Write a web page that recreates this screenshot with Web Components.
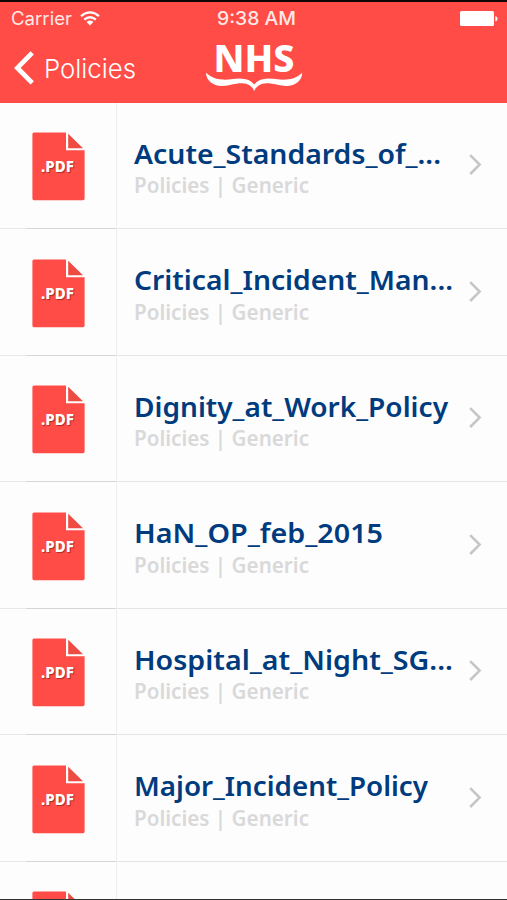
<!DOCTYPE html>
<html lang="en">
<head>
<meta charset="utf-8">
<meta name="viewport" content="width=device-width, initial-scale=1">
<title>Policies</title>
<style>
	html, body { margin: 0; height: 100%; overflow: hidden; background: #fdfdfd; }
	body { font-family: "Noto Sans", sans-serif; }
</style>
</head>
<body>
<policy-app>
	<status-bar slot="top" carrier="Carrier" time="9:38 AM"></status-bar>
	<nav-bar slot="top">Policies</nav-bar>
	<policy-row span="307">Acute_Standards_of_...</policy-row>
	<policy-row span="319">Critical_Incident_Man...</policy-row>
	<policy-row span="314">Dignity_at_Work_Policy</policy-row>
	<policy-row span="249">HaN_OP_feb_2015</policy-row>
	<policy-row span="319">Hospital_at_Night_SG...</policy-row>
	<policy-row span="294">Major_Incident_Policy</policy-row>
	<policy-row></policy-row>
</policy-app>

<script>
/* Base class: puts the markup of a subclass in an open shadow root */
class BaseElement extends HTMLElement {
	constructor() {
		super();
		this.attachShadow({ mode: 'open' });
	}

	connectedCallback() {
		this.shadowRoot.innerHTML = this.render();
	}
}

/**
 * fit-text: one line of text set to a fixed width
 *
 * Attributes: text, span (width), size, rise (baseline)
 */
class FitText extends BaseElement {
	render() {
		const span = this.getAttribute('span');
		const size = this.getAttribute('size');
		const rise = this.getAttribute('rise');
		return `
      <style>
        :host { display: block; }
        svg { display: block; overflow: visible; }
        text { fill: currentColor; font: inherit; }
      </style>
      <svg width="${span}" height="${size}">
        <text x="0" y="${rise}" style="font-size:${size}px" textLength="${span}" lengthAdjust="spacingAndGlyphs">${this.getAttribute('text')}</text>
      </svg>
    `;
	}
}

class StatusBar extends BaseElement {
	render() {
		return `
      <style>
        :host {
          display: grid;
          grid-template-columns: 1fr auto 1fr;
          align-items: center;
          height: 33px;
          padding: 0 9px 0 11px;
          color: #ffe9e7;
          font-family: Inter, sans-serif;
        }
        .left { display: flex; align-items: center; gap: 8px; }
        .time { font-weight: 500; padding-left: 4px; }
        .battery { justify-self: end; display: block; }
      </style>
      <div class="left">
        <fit-text text="${this.getAttribute('carrier')}" span="61" size="18" rise="15"></fit-text>
        <svg width="20" height="16" viewBox="0 0 20 16" fill="none" stroke="#fff" stroke-width="2.3">
          <path d="M1 5.1Q10-2.3 19 5.1M4.2 8.7Q10 3.7 15.8 8.7"/>
          <path d="M6.6 11Q10 8.2 13.4 11L10 14.4Z" fill="#fff" stroke="none"/>
        </svg>
      </div>
      <fit-text class="time" text="${this.getAttribute('time')}" span="79" size="18" rise="15"></fit-text>
      <svg class="battery" width="39" height="16" viewBox="0 0 39 16" fill="#fff">
        <rect x="1" y="0" width="34" height="15" rx="1.5"/>
        <path d="M36.3 5Q38.6 5.6 38.6 7.8T36.3 10.5Z"/>
      </svg>
    `;
	}
}

class NavBar extends BaseElement {
	render() {
		return `
      <style>
        :host {
          display: grid;
          grid-template-columns: 1fr 98px 1fr;
          height: 67px;
          color: #fff;
        }
        .back {
          display: flex;
          align-items: center;
          gap: 10px;
          padding: 0 0 1px 14px;
          font-family: Inter, sans-serif;
          font-weight: 300;
        }
        .logo { display: block; margin-top: 6px; overflow: visible; }
        .logo text { font: 800 37px/1 "Noto Sans", sans-serif; }
      </style>
      <div class="back">
        <svg width="20" height="34" viewBox="0 0 20 34" fill="none" stroke="#fff" stroke-width="4.8">
          <path d="M18.2 1.9L3.4 16.9L18.2 31.9"/>
        </svg>
        <fit-text text="${this.textContent}" span="92" size="26" rise="22.5"></fit-text>
      </div>
      <svg class="logo" width="98" height="54" viewBox="0 0 98 54" fill="#fff">
        <text x="8.5" y="30.8" textLength="81" lengthAdjust="spacingAndGlyphs">NHS</text>
        <path d="M1 31.7Q8 38 17 38.6C25 39 29 37.5 35 37.5Q45 37.6 49.2 43.5Q53.5 37.6 63.5 37.5C69.5 37.5 73.5 39 81.5 38.6Q90.5 38 97.2 31.7C97.2 39.5 90.5 44.8 81.5 45C73.5 45 69.5 42.3 61.5 42.3Q52.5 42.6 49.2 50Q46 42.6 37 42.3C29 42.3 25 45 17 45C8 44.8 1 39.5 1 31.7Z"/>
      </svg>
    `;
	}
}

class PdfIcon extends BaseElement {
	render() {
		return `
      <style>
        :host { display: block; }
        svg { display: block; }
        text { font: 800 15px "Noto Sans", sans-serif; }
      </style>
      <svg width="54" height="70" viewBox="0 0 54 70">
        <path d="M2 .4H34V18.3H52.6V66.6Q52.6 68.2 51 68.2H2Q.4 68.2 .4 66.6V1.9Q.4 .4 2 .4Z" fill="#ff4c46"/>
        <path d="M36.2 1.8L51 16.2H36.2Z" fill="#ee4b43"/>
        ${this.hasAttribute('blank') ? '' : `
        <text x="9" y="40" fill="#fff" style="text-shadow: 1px 1px 1px rgba(120, 20, 20, .6)" textLength="33" lengthAdjust="spacingAndGlyphs">.PDF</text>`}
      </svg>
    `;
	}
}

/**
 * policy-row: a document in the list, its title is the text content
 */
class PolicyRow extends BaseElement {
	render() {
		const title = this.textContent;
		const body = title ? `
        <fit-text class="title" text="${title}" span="${this.getAttribute('span')}" size="27" rise="27"></fit-text>
        <fit-text class="sub" text="Policies | Generic" span="175" size="21" rise="21"></fit-text>` : '';
		return `
      <style>
        :host {
          display: grid;
          grid-template-columns: 117px 1fr 39px;
          flex: none;
          height: 126.5px;
        }
        .icon, .main, .more {
          box-sizing: border-box;
          border-bottom: 1.5px solid #e5e5e5;
        }
        .icon {
          border-right: 1px solid #efefef;
          border-bottom: 0;
          padding: 29.5px 0 0 32px;
          background: linear-gradient(90deg, #e9e9e9 26px, #d6d6d6 26px) bottom / 100% 1px no-repeat;
        }
        .main { padding: 34px 0 0 17px; }
        .title { color: #003b7e; font-weight: 600; }
        .sub { color: #d9d9d9; font-weight: 600; margin-top: 8.5px; }
        .more { padding-top: 50.5px; }
        .more svg { display: block; }
      </style>
      <div class="icon"><pdf-icon ${title ? '' : 'blank'}></pdf-icon></div>
      <div class="main">${body}</div>
      <div class="more">
        <svg width="16" height="24" viewBox="0 0 16 24" fill="none" stroke="#c6c6c9" stroke-width="2.6">
          <path d="M2.2 2.2L11.6 11.6L2.2 21"/>
        </svg>
      </div>
    `;
	}
}

class PolicyApp extends BaseElement {
	render() {
		return `
      <style>
        :host {
          display: flex;
          flex-direction: column;
          box-sizing: border-box;
          width: 507px;
          height: 900px;
          overflow: hidden;
          border-top: 2px solid #100405;
          border-bottom: 1px solid #333;
          background: #fdfdfd;
        }
        header { flex: none; background: #ff4c46; height: 100.5px; }
        main { display: flex; flex-direction: column; flex: 1; min-height: 0; overflow: hidden; }
      </style>
      <header><slot name="top"></slot></header>
      <main><slot></slot></main>
    `;
	}
}

customElements.define('fit-text', FitText);
customElements.define('status-bar', StatusBar);
customElements.define('nav-bar', NavBar);
customElements.define('pdf-icon', PdfIcon);
customElements.define('policy-row', PolicyRow);
customElements.define('policy-app', PolicyApp);
</script>
</body>
</html>
